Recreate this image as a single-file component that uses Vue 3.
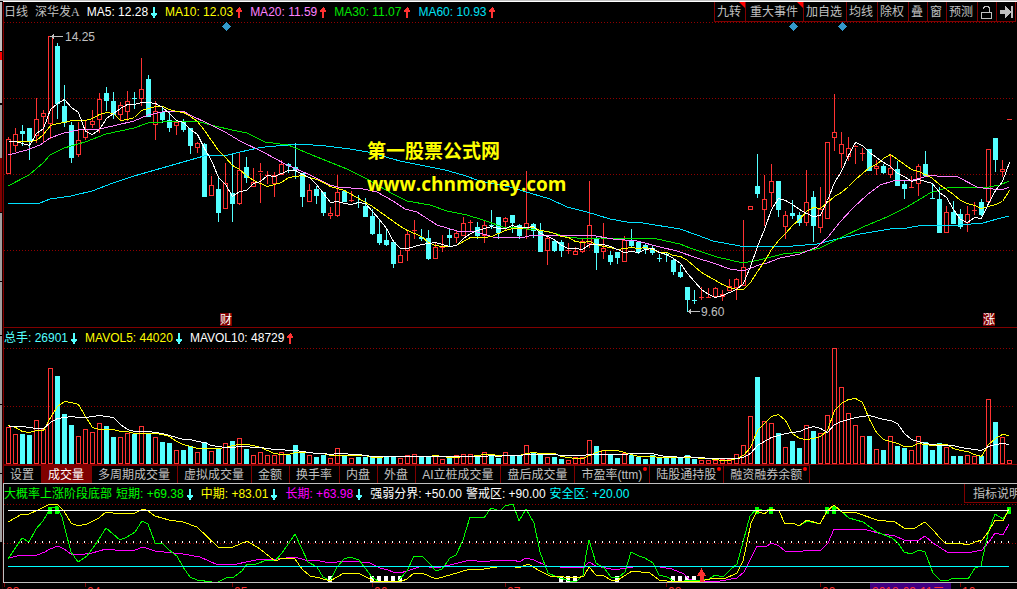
<script setup>
import { ref } from 'vue'

// kind (R rising / C falling), high, body top, body bottom, low
const candleText = `R137,139,174,174 R128,134,146,152 C125,131,134,146 C128,128,141,160 R98,119,136,143 R110,113,117,143
R36,36,124,139 C43,46,104,119 C85,106,123,127 C122,125,158,163 R122,140,155,157 R120,129,138,140
R110,121,125,128 R93,99,120,133 C87,93,101,111 C92,101,115,119 R102,105,115,121 R91,101,112,121
C92,98,99,109 R58,89,99,106 C75,79,117,117 R101,111,125,140 C108,112,120,123 C112,120,128,132
R121,122,126,135 C119,122,130,132 C128,128,146,154 R142,143,148,153 C143,144,197,197 R176,185,196,196
C178,189,213,222 R163,183,209,209 C154,193,204,222 R152,170,204,205 C157,167,178,183 R168,182,187,187
R163,171,173,203 R171,175,176,184 R172,175,184,197 R160,164,175,175 C163,164,166,173 C143,167,170,179
C173,173,197,207 R184,190,202,202 C186,189,196,204 C192,192,213,216 R207,213,216,219 R175,192,216,217
C190,191,202,202 R191,200,201,202 C195,202,203,208 C198,206,217,217 C209,216,234,235 C220,234,243,245
C229,240,245,246 C241,242,264,268 R250,255,263,263 R231,234,251,261 R220,230,231,239 C229,237,239,241
C230,238,259,260 R242,247,259,259 R235,247,248,252 C228,235,238,247 R231,233,238,243 R217,223,236,236
R220,222,223,232 C222,227,236,239 R220,225,236,243 C210,225,226,229 C217,217,233,239 R217,218,222,231
C215,215,223,233 C224,225,236,239 R171,223,229,239 C223,224,231,238 C223,231,252,252 R236,238,251,265
C240,241,251,252 C240,242,251,257 R243,250,251,254 R247,251,255,255 R238,241,252,253 R181,225,244,248
C237,238,253,270 R223,248,252,259 C251,255,262,265 C252,252,258,264 R236,240,262,262 C229,240,246,247
C242,242,252,254 C244,245,249,254 C246,248,253,255 C254,258,259,262 C252,254,255,262 C259,260,272,275
C265,272,277,278 C287,287,300,312 C290,300,301,304 R287,297,298,300 R288,297,298,298 R287,288,297,297
R290,294,297,301 R279,286,291,291 R278,279,288,300 R220,267,286,286 R206,206,210,210 C154,186,194,198
R175,199,210,226 R164,181,193,207 C181,181,210,217 R211,215,227,239 C200,213,216,219 C212,215,223,226
R170,202,223,226 C191,197,226,242 R187,209,228,233 R142,142,219,219 R94,132,138,151 R132,144,154,168
R137,148,157,161 R145,146,148,164 R148,153,154,161 C149,149,171,171 R160,166,169,175 C164,166,173,174
R154,168,175,178 C161,169,186,186 C181,184,189,199 R176,187,188,188 R164,166,184,196 C151,164,176,177
C184,198,199,199 C187,199,233,233 R206,212,233,233 C201,212,224,224 C209,214,227,229 R206,214,223,232
R202,210,211,215 C199,202,215,216 R149,149,202,202 C138,138,160,172 R160,169,172,177 R119,119,120,120`

const volumeTops = `427 434 434 435 420 429 368 376 414 425 436 429 432 423 426 437 437 433 434 426 433 437 442 443
450 450 446 452 442 451 449 443 441 438 449 455 452 455 455 452 455 445 451 455 457 455 458 448
455 458 457 457 456 456 456 456 458 455 454 456 456 456 459 457 455 454 454 456 452 455 458 452
456 456 445 452 454 457 457 459 460 457 457 440 446 450 455 458 453 455 457 459 455 458 457 457
457 455 459 460 460 460 459 459 454 445 416 377 421 423 433 447 441 448 425 431 433 415 348 387
413 425 436 436 449 450 436 446 448 450 436 442 450 443 447 456 456 455 456 456 399 422 437 460`
  .trim().split(/\s+/).map(Number)

const STEP = 7
const FIRST = 8
const VOLUME_BASE = 464

const candles = candleText.trim().split(/\s+/).map((item, i) => {
  const [high, top, bottom, low] = item.slice(1).split(',').map(Number)
  return { x: FIRST + STEP * i, rising: item[0] === 'R', high, top, bottom, low }
})
const volumes = candles.map((c, i) => ({ x: c.x, rising: c.rising, top: volumeTops[i] }))

// Moving average over `span` values; `seed` supplies the points before enough history exists
function average(values, span, seed) {
  return values
    .map((_, i) => {
      const y = i < span - 1
        ? seed[i]
        : values.slice(i - span + 1, i + 1).reduce((a, b) => a + b, 0) / span
      return `${FIRST + STEP * i + 0.5},${Math.round(y) + 0.5}`
    })
    .join(' ')
}
const closes = candles.map((c) => (c.rising ? c.top : c.bottom))

const priceLines = [
  {
    cls: 'cyan-line',
    points: '8,203 40,203 50,199 71,196 92,191 113,183 134,176 162,168 190,160 204,156 228,155 240,152 258,148 265,147 288,145 300,144 326,146 350,149 368,152 400,161 430,167 445,170 463,175 480,181 510,187 523,191 550,199 567,207 587,212 610,219 627,222 643,223 680,229 697,235 713,241 740,246 759,246 793,246 817,244 837,239 860,234 890,229 907,228 923,225 960,225 983,223 997,219 1009,216',
  },
  {
    cls: 'green-line',
    points: '8,186 29,175 43,163 50,155 64,148 85,142 106,134 134,128 148,123 176,121 200,122 215,126 232,130 247,133 265,142 288,145 317,157 347,169 367,179 393,194 407,201 430,205 447,211 467,215 483,220 503,227 517,228 537,230 550,232 567,237 587,239 600,238 657,239 680,244 690,248 717,257 743,263 759,260 783,254 803,252 820,248 840,238 863,227 887,217 907,207 930,193 950,187 983,188 1000,185 1009,181',
  },
  {
    cls: 'pink-line',
    points: '8,155 27,150 40,145 50,138 64,133 78,130 99,129 113,126 134,121 148,115 162,112 183,111 190,115 211,125 225,132 240,141 263,152 287,165 310,175 330,185 338,187 363,189 377,192 393,201 405,209 417,212 437,225 457,231 477,232 493,237 525,237 533,235 550,235 563,236 590,235 613,239 637,241 660,247 677,251 697,258 713,263 730,269 743,271 759,265 767,263 780,258 800,254 817,247 828,237 840,222 853,208 867,195 880,185 893,181 913,180 932,175 937,176 958,177 977,187 983,188 1002,190 1009,187',
  },
  { cls: 'yellow-line', points: average(closes, 10, [141, 141, 141, 141, 140, 134, 125, 123, 122]) },
  { cls: 'white-line', points: average(closes, 5, [141, 141, 143, 145]) },
]

const volumeLines = [
  { cls: 'yellow-line', points: average(volumeTops, 5, [425, 427, 431, 432]) },
  { cls: 'white-line', points: average(volumeTops, 10, [426, 426, 426, 427, 428, 428, 422, 418, 417]) },
]

const oscillatorLines = [
  {
    cls: 'magenta-line',
    points: '8,558 22,555 37,555 45,552 50,549 58,546 64,549 71,554 78,555 92,553 106,549 115,550 135,550 143,547 155,551 183,554 200,557 218,565 226,564 232,565 256,560 277,559 295,557 305,560 320,561 330,563 344,561 360,562 370,563 380,568 388,570 393,572 400,573 407,571 422,566 436,568 450,565 470,560 484,562 497,560 514,560 519,562 526,558 534,560 547,566 560,567 577,568 584,567 589,562 596,566 611,569 620,569 639,566 654,566 672,569 684,574 689,579 694,581 720,581 737,578 744,572 750,560 757,546 765,547 772,543 779,546 785,551 799,552 807,550 820,551 828,543 834,529 849,529 867,530 882,534 895,536 904,540 912,541 919,540 925,536 933,543 947,552 967,553 982,550 989,542 995,533 1003,535 1009,524',
  },
  {
    cls: 'lime-line',
    points: '8,559 22,538 29,542 36,529 43,521 50,509 57,506 62,517 64,525 71,552 78,562 87,556 93,548 99,539 106,528 113,534 120,540 127,537 135,532 142,521 148,524 155,543 162,543 169,550 177,556 183,567 190,577 197,580 212,582 218,582 226,578 234,577 242,571 247,564 256,564 267,560 275,561 282,553 295,534 308,562 317,567 323,577 330,581 337,567 344,559 350,557 359,560 365,568 372,577 378,581 398,581 407,571 414,556 422,556 429,563 436,571 442,569 450,558 456,555 463,540 470,517 484,518 491,508 500,511 505,506 513,504 519,521 526,509 534,523 540,552 548,573 557,577 570,581 577,581 583,575 586,555 589,540 596,563 604,568 611,577 618,578 625,572 631,552 639,556 645,558 653,563 659,575 667,577 674,581 684,581 700,580 709,579 715,575 723,577 730,570 737,564 743,542 750,516 757,508 764,511 771,509 779,511 785,524 793,523 799,526 807,521 820,524 827,511 834,506 842,512 849,518 863,522 877,532 892,538 898,543 904,552 911,554 919,550 925,552 933,573 940,580 946,581 954,578 968,579 975,568 981,566 985,547 989,530 995,514 1003,519 1009,510',
  },
  {
    cls: 'yellow-line',
    points: '8,522 22,514 29,514 38,510 50,504 57,504 64,511 71,523 78,526 87,524 99,518 106,512 120,514 135,513 143,509 148,511 155,516 169,520 183,522 197,527 218,547 233,547 247,541 260,549 275,561 283,558 295,559 302,569 310,576 320,578 330,581 337,577 344,573 358,573 370,579 373,581 402,581 407,579 414,573 422,573 436,579 450,575 470,569 484,569 497,567 512,566 519,568 528,564 540,571 550,576 577,578 584,576 589,567 596,575 604,576 611,580 618,580 632,571 650,573 659,580 667,581 700,581 715,578 724,579 737,573 743,561 746,547 751,523 757,511 764,514 771,509 779,511 785,524 793,523 799,526 807,520 820,524 827,511 834,505 842,512 857,513 877,520 895,522 904,528 915,528 925,522 933,530 940,538 945,543 959,543 968,545 975,542 982,540 989,531 995,520 1003,521 1009,509',
  },
]

const lowMarks = [330, 372, 379, 386, 393, 400, 561, 568, 575, 617, 673, 680, 687, 694]
const highMarks = [50, 57, 757, 771, 827, 834, 1009]

const averages = [
  { text: 'MA5: 12.28', cls: 'white', up: false },
  { text: 'MA10: 12.03', cls: 'yellow', up: true },
  { text: 'MA20: 11.59', cls: 'pink', up: true },
  { text: 'MA30: 11.07', cls: 'green', up: true },
  { text: 'MA60: 10.93', cls: 'cyan', up: true },
]
const volumeStats = [
  { text: '总手: 26901', cls: 'aqua', up: false },
  { text: 'MAVOL5: 44020', cls: 'yellow', up: false },
  { text: 'MAVOL10: 48729', cls: 'white', up: true },
]
const periods = [
  { text: '短期: +69.38', cls: 'lime' },
  { text: '中期: +83.01', cls: 'yellow' },
  { text: '长期: +63.98', cls: 'magenta' },
]
const zones = [
  { text: '强弱分界: +50.00', cls: 'white' },
  { text: '警戒区: +90.00', cls: 'white' },
  { text: '安全区: +20.00', cls: 'bright' },
]
const tools = [
  { text: '九转', hot: true },
  { text: '重大事件', hot: true, wide: true },
  { text: '加自选' },
  { text: '均线' },
  { text: '除权' },
  { text: '叠' },
  { text: '窗' },
  { text: '预测' },
]
const tabs = [
  { text: '设置' }, { text: '成交量' }, { text: '多周期成交量' }, { text: '虚拟成交量' },
  { text: '金额' }, { text: '换手率' }, { text: '内盘' }, { text: '外盘' },
  { text: 'AI立桩成交量' }, { text: '盘后成交量' }, { text: '市盈率(ttm)', dot: true },
  { text: '陆股通持股', dot: true }, { text: '融资融券余额', dot: true },
]
const activeTab = ref('成交量')

const months = [
  { x: 4, text: '03' }, { x: 85, text: '04' }, { x: 232, text: '05' }, { x: 372, text: '06' },
  { x: 505, text: '07' }, { x: 666, text: '08' }, { x: 820, text: '09' }, { x: 960, text: '10' },
]

const UP = 'M3 0h1v1h1v2h1v2h-2v6h-2v-6h-2v-2h1v-1h1v-1h1z'
const DOWN = 'M2 0h2v6h2v2h-1v1h-1v2h-2v-2h-1v-1h-1v-2h2z'
</script>

<template>
  <div class="terminal">
    <div class="rail"></div>
    <main class="board">
      <section class="panel">
        <header class="bar">
          <span class="period">日线</span>
          <span class="stock">深华发<span class="share">A</span></span>
          <span v-for="m in averages" :key="m.text" class="stat" :class="m.cls">
            {{ m.text }}
            <svg class="arrow" :class="m.up ? 'up' : 'down'" viewBox="0 0 7 11"><path :d="m.up ? UP : DOWN" /></svg>
          </span>
          <nav class="tools">
            <button v-for="t in tools" :key="t.text" type="button" class="tool" :class="{ wide: t.wide }">
              {{ t.text }}<i v-if="t.hot" class="corner"></i>
            </button>
            <button type="button" class="tool icon" aria-label="解锁">
              <svg viewBox="0 0 18 18"><path d="M3.500 9.500h10v6h-10zM5.500 6V5L7 3.500h3L11.500 5v4.500" class="outline" /></svg>
            </button>
            <button type="button" class="tool icon" aria-label="末尾">
              <svg viewBox="0 0 18 18"><path d="M3 7h5V3l6 6-6 6v-4H3zM14 3h2v12h-2z" class="solid" /></svg>
            </button>
          </nav>
        </header>
        <svg class="plot" viewBox="4 22 1013 305">
          <g class="grid">
            <path d="M4 22.500H1015M4 98.500H1015M4 174.500H1015M4 250.500H1015" />
          </g>
          <g v-for="c in candles" :key="c.x" :class="c.rising ? 'rise' : 'fall'">
            <template v-if="c.rising">
              <path v-if="c.top > c.high" :d="`M${c.x + 0.5} ${c.high}V${c.top}`" />
              <path v-if="c.low > c.bottom" :d="`M${c.x + 0.5} ${c.bottom}V${c.low}`" />
              <rect v-if="c.bottom - c.top > 2" :x="c.x - 1.5" :y="c.top + 0.5" width="4" :height="c.bottom - c.top - 1" />
              <path v-else :d="`M${c.x - 2} ${c.top + 0.5}h5`" />
            </template>
            <template v-else>
              <path :d="`M${c.x + 0.5} ${c.high}V${c.low}`" />
              <rect :x="c.x - 2" :y="c.top" width="5" :height="c.bottom - c.top" />
            </template>
          </g>
          <polyline v-for="l in priceLines" :key="l.cls" :class="l.cls" :points="l.points" />
          <g class="event">
            <path d="M226.500 22l4.500 4.500-4.500 4.500-4.500-4.500zM793.500 22l4.500 4.500-4.500 4.500-4.500-4.500zM842.500 22l4.500 4.500-4.500 4.500-4.500-4.500z" />
          </g>
          <g class="extreme">
            <path d="M50 36.500H63M53.500 34v5M52.500 35v3M688 311.500H700M690.500 309v5M689.500 310v3" />
            <text x="65" y="41">14.25</text>
            <text x="701" y="316">9.60</text>
          </g>
          <g class="badge">
            <rect x="220" y="313" width="12" height="13" />
            <rect x="983" y="313" width="12" height="13" />
            <text x="220" y="324">财</text>
            <text x="983" y="324">涨</text>
          </g>
          <text class="mark" x="367" y="158">第一股票公式网</text>
          <text class="mark latin" x="367" y="191">www.chnmoney.com</text>
        </svg>
      </section>

      <section class="panel ruled">
        <header class="bar">
          <span v-for="s in volumeStats" :key="s.text" class="stat" :class="s.cls">
            {{ s.text }}
            <svg class="arrow" :class="s.up ? 'up' : 'down'" viewBox="0 0 7 11"><path :d="s.up ? UP : DOWN" /></svg>
          </span>
        </header>
        <svg class="plot" viewBox="4 348 1013 117">
          <g class="grid"><path d="M4 348.500H1015M4 406.500H1015" /></g>
          <path class="base" d="M4 464.500H1017" />
          <g v-for="v in volumes" :key="v.x" :class="v.rising ? 'rise' : 'fall'">
            <rect v-if="v.rising" :x="v.x - 1.5" :y="v.top + 0.5" width="4" :height="VOLUME_BASE - v.top - 1" />
            <rect v-else :x="v.x - 2" :y="v.top" width="5" :height="VOLUME_BASE - v.top" />
          </g>
          <polyline v-for="l in volumeLines" :key="l.cls" :class="l.cls" :points="l.points" />
        </svg>
        <nav class="tabs">
          <button
            v-for="t in tabs"
            :key="t.text"
            type="button"
            class="tab"
            :class="{ active: activeTab === t.text }"
            @click="activeTab = t.text"
          >
            {{ t.text }}<i v-if="t.dot" class="dot"></i>
          </button>
        </nav>
      </section>

      <section class="panel framed">
        <header class="bar">
          <span class="title lime">大概率上涨阶段底部</span>
          <span v-for="p in periods" :key="p.text" class="stat" :class="p.cls">
            {{ p.text }}
            <svg class="arrow down" viewBox="0 0 7 11"><path :d="DOWN" /></svg>
          </span>
          <span v-for="z in zones" :key="z.text" class="zone" :class="z.cls">{{ z.text }}</span>
          <button type="button" class="help">指标说明</button>
        </header>
        <svg class="plot" viewBox="4 504 1013 78">
          <g class="grid"><path d="M4 504.500H1017M4 543.500H1017" /></g>
          <path class="middle" d="M14 542H1009" />
          <path class="marks-high" v-for="x in highMarks" :key="x" :d="`M${x - 2} 507h4v7h-4z`" />
          <path class="marks-low" v-for="x in lowMarks" :key="x" :d="`M${x - 2} 576h4v6h-4z`" />
          <polyline v-for="l in oscillatorLines" :key="l.cls" :class="l.cls" :points="l.points" />
          <path class="white-line" d="M8 510.500H1009" />
          <path class="safe" d="M8 566.500H1009" />
          <path class="signal" d="M701.500 568l4.500 8h-2.500v6h-4v-6h-2.500z" />
        </svg>
      </section>

      <svg class="axis" viewBox="4 583 1013 6">
        <g v-for="m in months" :key="m.x">
          <path class="base" :d="`M${m.x + 0.5} 583v4`" />
          <text :x="m.x + 2" y="596">{{ m.text }}</text>
        </g>
        <rect x="870" y="583" width="81" height="6" />
        <text x="872" y="596">2018-09-11二</text>
      </svg>
    </main>
  </div>
</template>

<style>
html,
body {
  background: #000;
  overflow: hidden;
}
</style>

<style scoped>
.terminal {
  display: grid;
  grid-template-columns: 3px minmax(0, 1fr);
  min-height: 100vh;
  box-sizing: border-box;
  border-top: 1px solid #c0c0c0;
  background: #000;
  color: #c0c0c0;
  font: 12px/20px "Liberation Sans", "Noto Sans CJK SC", sans-serif;
}
.rail {
  margin-top: 1px;
  border-right: 1px solid #200000;
  background: linear-gradient(
    #c0c0c0 0 49px, #000 49px 50px, #f00 50px 58px, #c0c0c0 58px 101px, #000 101px 103px,
    #a0a0a0 103px 156px, #800000 156px 210px, #000 210px 211px, #a0a0a0 211px 279px,
    #000 279px 280px, #a0a0a0 280px 333px, #000 333px 334px, #a0a0a0 334px 402px,
    #000 402px 403px, #a0a0a0 403px 471px, #000 471px 472px, #a0a0a0 472px 540px, #000 540px
  );
}
.board {
  border-top: 1px solid #fff;
}
.panel {
  border-left: 1px solid #800000;
}
.ruled {
  border-top: 1px solid #800000;
}
.framed {
  border: solid #c0c0c0;
  border-width: 1px 0 1px 1px;
}
.bar {
  display: flex;
  height: 20px;
  overflow: hidden;
  white-space: nowrap;
}
.period {
  margin-right: 7px;
}
.stock {
  margin-right: 7px;
}
.share {
  font-family: "Liberation Serif", serif;
}
.stat {
  display: flex;
  align-items: center;
  gap: 3px;
  margin-right: 7px;
}
.arrow {
  width: 7px;
  height: 11px;
  shape-rendering: crispEdges;
}
.up {
  fill: #ff3232;
}
.down {
  fill: #54ffff;
}
.white { color: #fff; }
.yellow { color: #ff0; }
.pink { color: #ff80ff; }
.green { color: #00e600; }
.lime { color: #0f0; }
.cyan { color: #00e1f5; }
.aqua { color: #54ffff; }
.bright { color: #0ff; }
.magenta { color: #f0f; }
.title {
  margin-right: 4px;
}
.zone {
  margin-right: 4px;
}
button {
  position: relative;
  margin: 0;
  padding: 0;
  border: 0;
  border-radius: 0;
  background: none;
  color: inherit;
  font: inherit;
  white-space: nowrap;
  cursor: pointer;
}
.tools {
  display: flex;
  margin-left: auto;
  margin-right: 1px;
  border-right: 1px solid #800000;
}
.tool {
  padding: 0 4px 0 2px;
  border-left: 1px solid #800000;
  border-bottom: 1px solid #800000;
}
.tool.wide {
  padding: 0 5px 0 4px;
}
.tool.icon {
  padding: 0;
}
.icon svg {
  display: block;
  width: 18px;
  height: 18px;
  shape-rendering: crispEdges;
}
.outline {
  fill: none;
  stroke: #c0c0c0;
}
.solid {
  fill: #c0c0c0;
}
.corner {
  position: absolute;
  top: 0;
  right: 0;
  border-top: 6px solid #f00;
  border-left: 6px solid transparent;
}
.plot {
  display: block;
  width: 100%;
  height: auto;
  shape-rendering: crispEdges;
}
.plot polyline,
.white-line,
.safe {
  fill: none;
  stroke-width: 1;
}
.grid path {
  stroke: #900000;
  stroke-dasharray: 1 2;
}
.base {
  stroke: #800000;
}
.rise path,
.rise rect {
  fill: none;
  stroke: #ff3232;
}
.fall path {
  stroke: #54ffff;
}
.fall rect {
  fill: #54ffff;
}
.cyan-line { stroke: #00e1ff; }
.green-line { stroke: #00e600; }
.pink-line { stroke: #ff80ff; }
.yellow-line { stroke: #ff0; }
.white-line { stroke: #fff; }
.magenta-line { stroke: #f0f; }
.lime-line { stroke: #0f0; }
.safe { stroke: #0ff; }
.event {
  fill: #3399cc;
}
.extreme path {
  stroke: #c0c0c0;
}
.extreme text {
  fill: #c0c0c0;
}
.badge rect {
  fill: #800000;
}
.badge text {
  fill: #fff;
}
.mark {
  fill: #ff0;
  font: bold 19px "Noto Sans CJK SC", sans-serif;
}
.latin {
  font-family: "Open Sans", sans-serif;
}
.middle {
  stroke: #fff;
  stroke-width: 2;
  stroke-dasharray: 1 6;
}
.marks-high {
  fill: #0f0;
}
.marks-low {
  fill: #fff;
}
.signal {
  fill: #ff3232;
}
.tabs {
  display: flex;
  height: 18px;
}
.tab {
  padding: 1px 7px 0 6px;
  border-top: 1px solid #800000;
  border-right: 1px solid #800000;
  line-height: 17px;
}
.active {
  background: #800000;
  color: #fff;
}
.dot {
  position: absolute;
  top: 1px;
  right: 2px;
  width: 4px;
  height: 4px;
  border-radius: 2px;
  background: #f00;
}
.help {
  width: 53px;
  height: 19px;
  margin-left: auto;
  padding-left: 8px;
  border-left: 1px solid #800000;
  border-bottom: 1px solid #800000;
  overflow: hidden;
  text-align: left;
}
.axis {
  display: block;
  width: 100%;
  padding-left: 1px;
  box-sizing: border-box;
  overflow: hidden;
}
.axis text {
  fill: #ff3232;
}
.axis rect {
  fill: #400080;
}
</style>
